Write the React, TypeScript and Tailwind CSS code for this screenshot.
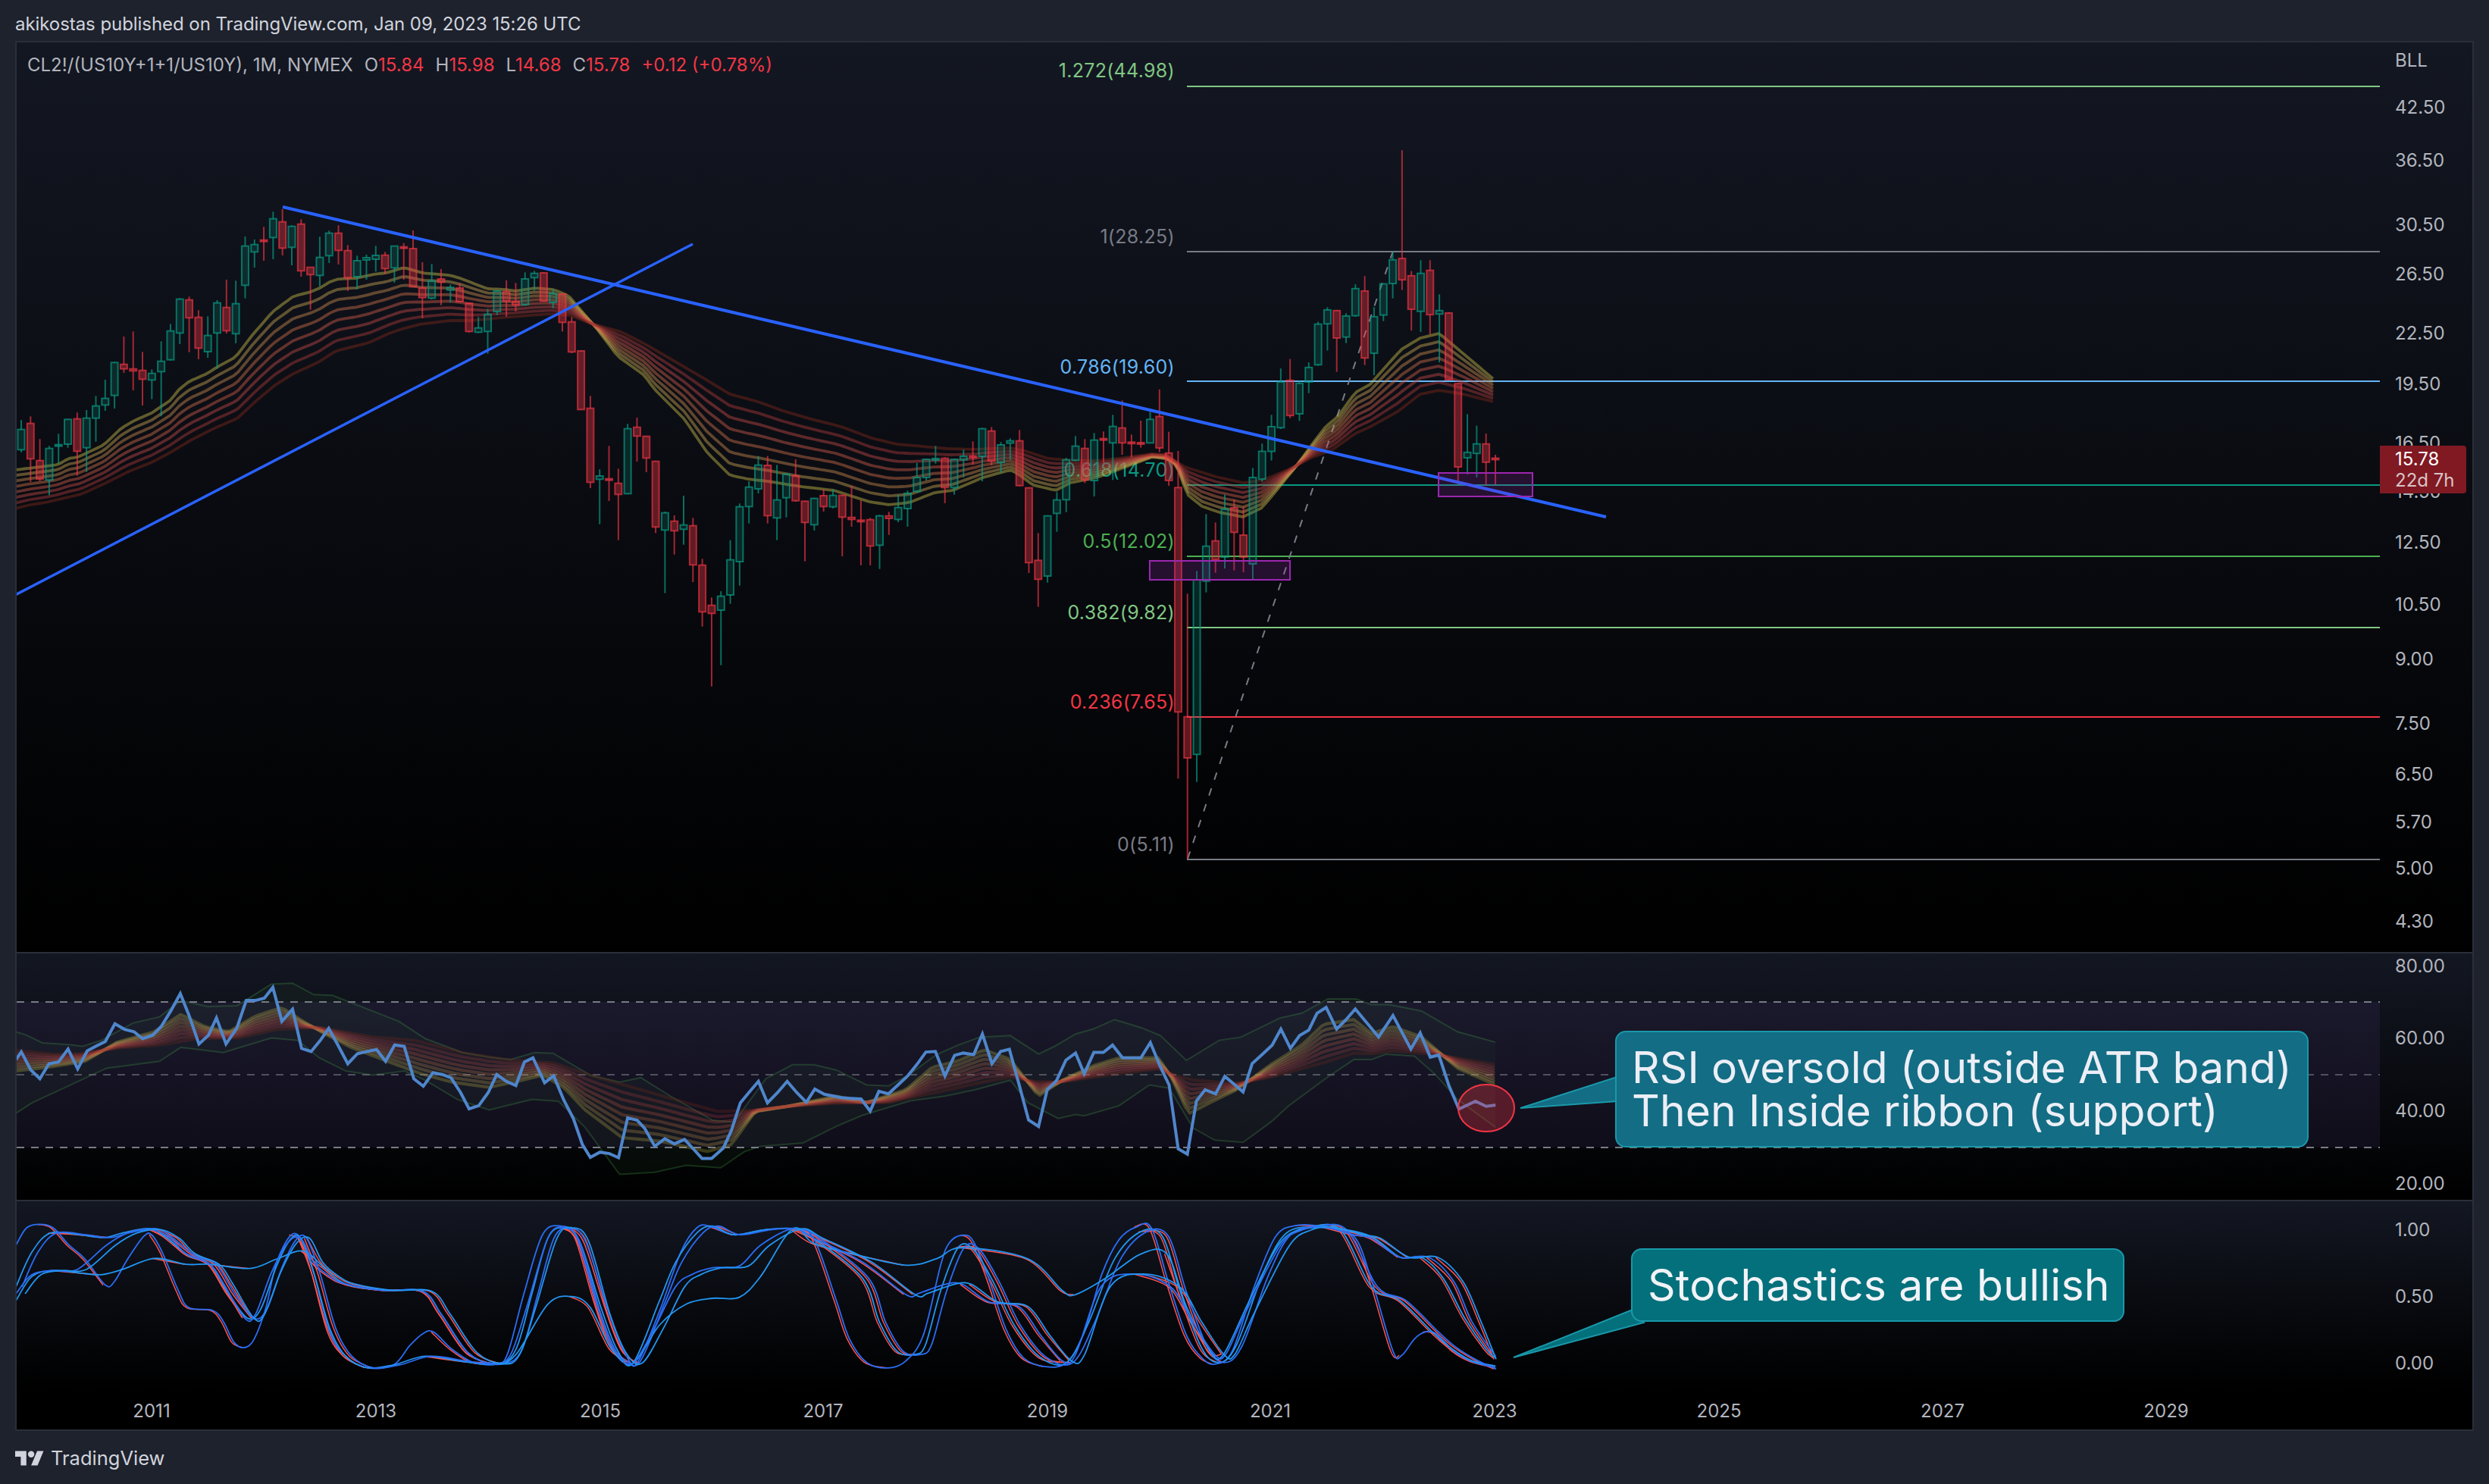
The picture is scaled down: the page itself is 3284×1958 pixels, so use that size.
type Pt = number[];
type Row = [string, number, number, number, number];

// candles are read off the chart as [dir, high, top, bottom, low]
const seg = (off: number, s: number, rows: Row[]): Row[] =>
  rows.map(([d, a, b, c, e]) => [d, off + a / s, off + b / s, off + c / s, off + e / s]);

const candles: Row[] = [
  ...seg(260, 3, [
    ['g', 883, 920, 1000, 1010], ['r', 868, 896, 1036, 1128], ['r', 958, 1043, 1116, 1125], ['g', 985, 995, 1120, 1180],
    ['g', 937, 980, 985, 1055], ['g', 878, 880, 978, 992], ['r', 853, 878, 1006, 1103], ['g', 843, 875, 992, 1088],
    ['g', 787, 827, 875, 968], ['g', 723, 797, 823, 846], ['g', 652, 655, 785, 837], ['r', 552, 662, 680, 696],
    ['r', 532, 680, 688, 765], ['r', 613, 686, 721, 825], ['g', 682, 698, 724, 800], ['g', 571, 650, 691, 868],
    ['g', 502, 530, 644, 647], ['g', 400, 404, 538, 582], ['r', 394, 407, 478, 614], ['r', 448, 476, 598, 642],
    ['g', 472, 548, 612, 636], ['g', 408, 419, 538, 680], ['r', 327, 437, 529, 540], ['g', 331, 422, 541, 579],
    ['g', 156, 194, 349, 401], ['g', 168, 188, 217, 279], ['r', 118, 170, 175, 252], ['g', 58, 86, 160, 246],
    ['r', 48, 98, 202, 231], ['g', 112, 116, 199, 270], ['r', 88, 107, 292, 315], ['r', 278, 278, 307, 446],
    ['g', 157, 239, 310, 354], ['g', 133, 143, 232, 261], ['r', 112, 143, 211, 267], ['r', 190, 212, 320, 372],
    ['g', 232, 252, 315, 365], ['g', 228, 240, 249, 327], ['g', 193, 231, 246, 295], ['r', 217, 230, 283, 305],
    ['g', 194, 194, 280, 339], ['r', 182, 197, 200, 327],
  ]),
  ...seg(340, 3, [
    ['r', -108, -36, 115, 115], ['r', 18, 120, 158, 240], ['g', 25, 92, 160, 165], ['r', 45, 84, 97, 188],
    ['g', 106, 118, 128, 178], ['r', 100, 120, 174, 176], ['r', 178, 180, 292, 296], ['g', 235, 278, 295, 298],
    ['g', 203, 224, 292, 380], ['g', 130, 132, 213, 227], ['r', 90, 134, 172, 234], ['r', 100, 173, 187, 213],
    ['g', 58, 84, 186, 190], ['g', 52, 62, 79, 130], ['r', 58, 60, 172, 174], ['g', 125, 142, 177, 200],
    ['r', 142, 144, 256, 292], ['r', 235, 254, 373, 378], ['r', 367, 369, 601, 603], ['r', 547, 596, 889, 912],
    ['g', 838, 864, 877, 1055], ['r', 745, 875, 880, 963], ['r', 835, 893, 937, 1118], ['g', 658, 677, 934, 936],
    ['r', 633, 671, 706, 807], ['r', 705, 707, 793, 849], ['r', 804, 806, 1066, 1090], ['g', 1005, 1010, 1078, 1328],
    ['r', 1020, 1043, 1081, 1175], ['g', 942, 1058, 1075, 1136], ['r', 1030, 1061, 1216, 1284], ['r', 1192, 1217, 1402, 1460],
    ['r', 1345, 1376, 1408, 1697], ['g', 1320, 1340, 1395, 1613], ['g', 1118, 1196, 1335, 1370], ['g', 973, 986, 1203, 1298],
    ['g', 885, 908, 985, 1052], ['g', 785, 821, 915, 933], ['r', 785, 822, 1021, 1052], ['g', 820, 959, 1030, 1118],
    ['g', 853, 857, 950, 1028],
  ]),
  ...seg(500, 3, [
    ['r', 318, 383, 482, 486], ['r', 482, 484, 568, 722], ['g', 470, 473, 577, 600], ['r', 436, 462, 505, 525],
    ['g', 436, 461, 506, 512], ['r', 458, 461, 547, 702], ['r', 423, 548, 556, 585], ['r', 480, 559, 563, 738],
    ['r', 550, 557, 661, 738], ['g', 538, 542, 658, 752], ['r', 526, 542, 552, 617], ['g', 458, 509, 556, 567],
    ['g', 442, 453, 513, 585], ['g', 332, 390, 445, 450], ['g', 316, 318, 390, 402], ['g', 265, 315, 321, 335],
    ['r', 310, 314, 430, 492], ['g', 316, 318, 430, 458], ['g', 280, 306, 320, 390], ['r', 247, 305, 310, 340],
    ['g', 193, 197, 306, 405], ['r', 190, 206, 325, 342], ['g', 250, 261, 331, 372], ['g', 235, 245, 254, 320],
    ['r', 202, 245, 422, 425], ['r', 430, 431, 727, 768], ['r', 610, 718, 793, 902], ['g', 540, 542, 780, 806],
    ['g', 448, 479, 532, 605], ['g', 312, 320, 478, 527], ['g', 226, 266, 322, 325], ['r', 238, 275, 400, 412],
    ['g', 214, 242, 402, 465], ['r', 208, 236, 241, 332], ['g', 142, 188, 253, 400], ['r', 85, 194, 253, 300],
    ['r', 220, 250, 255, 310], ['r', 165, 252, 258, 272], ['g', 130, 160, 253, 255],
  ]),
  ...seg(150, 2.24, [['r', 815, 895, 988, 1000], ['r', 940, 1003, 1084, 1100]]),
  ...seg(600, 3, [
    ['r', -15, 130, 1018, 1282], ['r', 550, 1037, 1200, 1599], ['g', 460, 495, 1186, 1295], ['g', 235, 362, 500, 545],
    ['r', 268, 341, 415, 467], ['g', 157, 215, 405, 450], ['r', 178, 210, 307, 458], ['r', 205, 318, 405, 465],
    ['g', 52, 90, 432, 495],
  ]),
  ...seg(150, 2.24, [
    ['g', 975, 998, 1080, 1088], ['g', 890, 925, 998, 1025], ['g', 753, 793, 928, 932], ['r', 725, 788, 892, 900],
    ['g', 790, 797, 887, 908], ['g', 735, 750, 793, 826], ['g', 615, 622, 742, 745], ['g', 572, 580, 621, 700],
    ['r', 580, 582, 663, 763], ['g', 590, 598, 660, 678], ['g', 504, 517, 597, 600], ['r', 480, 524, 722, 743],
    ['g', 572, 600, 708, 773], ['g', 503, 503, 595, 613], ['g', 408, 432, 502, 546], ['r', 108, 428, 491, 521],
    ['r', 465, 479, 578, 641], ['g', 433, 472, 584, 645], ['r', 433, 463, 594, 652], ['g', 534, 582, 592, 735],
    ['r', 587, 589, 786, 788], ['r', 796, 798, 1044, 1095], ['g', 888, 1001, 1017, 1066], ['g', 922, 976, 1004, 1075],
    ['r', 945, 976, 1030, 1098], ['r', 1008, 1018, 1022, 1096],
  ]),
];

const candleX = (i: number) => 28 + 12.31 * i;

// the moving average ribbon: the fast and slow edges, the others sit between them
const ribbonFast: Pt[] = [
  [20, 620], [53, 616], [77, 613], [90, 605], [103, 603], [137, 587], [160, 565], [177, 555], [200, 545], [225, 528], [237, 513],
  [250, 503], [273, 493], [287, 484], [311, 471], [333, 442], [360, 411], [387, 391], [410, 385], [422, 380], [435, 372], [447, 368],
  [470, 367], [493, 362], [510, 360], [533, 353], [557, 360], [593, 363], [607, 367], [643, 381], [667, 382], [680, 384], [707, 380],
  [730, 382], [750, 390], [773, 417], [787, 433], [815, 470], [850, 495], [863, 513], [903, 553], [933, 597], [963, 627], [987, 632],
  [1013, 635], [1057, 642], [1100, 647], [1147, 662], [1173, 666], [1200, 663], [1233, 650], [1257, 647], [1297, 630], [1333, 620],
  [1343, 625], [1363, 640], [1393, 647], [1412, 637], [1447, 630], [1480, 618], [1520, 603], [1538, 605], [1553, 614], [1566, 652],
  [1586, 668], [1609, 676], [1640, 682], [1665, 670], [1686, 645], [1711, 614], [1732, 585], [1749, 563], [1765, 550], [1788, 518],
  [1808, 507], [1829, 483], [1849, 461], [1874, 446], [1899, 440], [1974, 503],
];
const ribbonSlow: Pt[] = [
  [20, 671], [40, 666], [60, 663], [77, 659], [107, 652], [140, 637], [170, 622], [200, 610], [223, 598], [253, 580], [283, 565],
  [313, 552], [340, 527], [363, 508], [387, 493], [420, 478], [443, 463], [487, 452], [513, 440], [527, 435], [553, 428], [593, 423],
  [620, 423], [653, 420], [687, 417], [727, 414], [753, 416], [780, 427], [820, 438], [853, 455], [887, 475], [930, 500], [963, 520],
  [1000, 530], [1033, 542], [1067, 552], [1110, 563], [1150, 578], [1183, 586], [1217, 589], [1250, 592], [1283, 593], [1333, 591],
  [1353, 595], [1383, 605], [1407, 607], [1447, 608], [1483, 604], [1520, 599], [1538, 600], [1563, 616], [1604, 629], [1640, 637],
  [1665, 634], [1701, 619], [1732, 603], [1757, 594], [1788, 572], [1808, 563], [1844, 543], [1874, 520], [1899, 515], [1931, 520],
  [1974, 531],
];
const ribbonColors = ['#cfc24a', '#d0a855', '#d08e50', '#d4724a', '#d45e4a', '#c84a48', '#b03c3c', '#7f2a1c'];

const at = (pts: Pt[], x: number) => {
  for (let i = 1; i < pts.length; i++) {
    if (x <= pts[i][0]) {
      const t = (x - pts[i - 1][0]) / (pts[i][0] - pts[i - 1][0]);
      return pts[i - 1][1] + (pts[i][1] - pts[i - 1][1]) * t;
    }
  }
  return pts[pts.length - 1][1];
};

const ribbon = (fast: Pt[], slow: Pt[], a: number, b: number) =>
  ribbonColors.map((_, n) => {
    const out: string[] = [];
    for (let x = a; x <= b; x += 6) {
      const f = at(fast, x);
      out.push(`${x},${(f + ((at(slow, x) - f) * n) / 7).toFixed(1)}`);
    }
    return out.join(' ');
  });

const line = (pts: Pt[]) => pts.map((p) => `${p[0].toFixed(1)},${p[1].toFixed(1)}`).join(' ');

// Catmull-Rom through the points, good enough for the stochastics
const smooth = (pts: Pt[]) => {
  let d = `M${pts[0][0]} ${pts[0][1]}`;
  for (let i = 0; i < pts.length - 1; i++) {
    const p0 = pts[Math.max(i - 1, 0)];
    const p1 = pts[i];
    const p2 = pts[i + 1];
    const p3 = pts[Math.min(i + 2, pts.length - 1)];
    d += ` C${p1[0] + (p2[0] - p0[0]) / 6} ${p1[1] + (p2[1] - p0[1]) / 6} ${p2[0] - (p3[0] - p1[0]) / 6} ${p2[1] - (p3[1] - p1[1]) / 6} ${p2[0]} ${p2[1]}`;
  }
  return d;
};

// the red signal line only shows where the stochastic is falling
const fallingRuns = (pts: Pt[]) => {
  const runs: Pt[][] = [];
  let run: Pt[] = [];
  for (let i = 1; i < pts.length; i++) {
    if (pts[i][1] > pts[i - 1][1]) {
      if (!run.length) run.push(pts[i - 1]);
      run.push(pts[i]);
    } else if (run.length) {
      runs.push(run);
      run = [];
    }
  }
  if (run.length) runs.push(run);
  return runs;
};

const a = (p: Pt) => [p[0] / 1.425, 1240 + p[1] / 2.184];
const b = (p: Pt) => [1000 + p[0] / 1.742, 1240 + p[1] / 2.376];
const c = (p: Pt) => [1800 + p[0] / 1.0566, 1240 + p[1] / 2.184];

const join = (p1: Pt[], p2: Pt[], p3: Pt[]) => [
  ...p1.map(a).filter((p) => p[0] <= 1100),
  ...p2.map(b).filter((p) => p[0] > 1100 && p[0] <= 1800),
  ...p3.map(c).filter((p) => p[0] > 1800),
];

const rsiLine = join(
  [[30, 345], [40, 323], [58, 375], [75, 400], [92, 357], [110, 352], [128, 315], [146, 372], [164, 320], [182, 305], [198, 293], [216, 242], [234, 258], [252, 265], [268, 285], [287, 275], [303, 250], [321, 205], [339, 155], [356, 220], [374, 300], [392, 275], [407, 225], [425, 300], [445, 255], [463, 175], [480, 175], [497, 168], [513, 137], [530, 235], [550, 200], [567, 313], [585, 322], [602, 290], [618, 255], [636, 305], [654, 357], [672, 328], [690, 322], [708, 316], [725, 350], [742, 303], [760, 307], [778, 400], [796, 422], [814, 383], [832, 388], [848, 398], [866, 440], [882, 487], [900, 478], [918, 440], [934, 388], [952, 408], [970, 420], [986, 352], [1002, 340], [1024, 412], [1041, 392], [1060, 462], [1078, 515], [1095, 590], [1110, 627], [1128, 612], [1146, 616], [1163, 628], [1180, 513], [1198, 520], [1212, 543], [1231, 595], [1250, 573], [1268, 588], [1287, 575], [1305, 605], [1320, 630], [1338, 630], [1360, 600], [1375, 550], [1392, 470], [1408, 440], [1426, 408], [1443, 470], [1462, 440], [1480, 408], [1498, 440], [1516, 468], [1532, 430], [1550, 445], [1568, 422]],
  [[192, 495], [214, 497], [237, 499], [258, 537], [278, 475], [300, 483], [322, 455], [344, 427], [366, 390], [386, 352], [408, 350], [430, 427], [452, 362], [472, 355], [496, 360], [516, 295], [538, 388], [558, 350], [578, 343], [600, 452], [622, 565], [645, 585], [665, 470], [686, 442], [708, 377], [730, 355], [750, 420], [772, 353], [794, 353], [815, 330], [838, 370], [880, 370], [902, 322], [924, 395], [945, 455], [966, 655], [987, 672], [1008, 505], [1028, 470], [1052, 483], [1073, 428], [1094, 452], [1115, 477], [1136, 388], [1160, 358], [1182, 330], [1202, 280], [1224, 340], [1245, 300], [1266, 283], [1285, 230], [1306, 212], [1330, 280], [1352, 250], [1373, 217], [1394, 358]],
  [[20, 280], [40, 218], [65, 315], [78, 268], [92, 338], [104, 332], [118, 420], [132, 488], [155, 465], [170, 480], [183, 476]],
);

const bandTop = join(
  [[30, 265], [50, 275], [80, 297], [130, 302], [155, 307], [190, 290], [250, 240], [300, 222], [340, 175], [390, 192], [445, 190], [510, 128], [550, 125], [590, 158], [625, 160], [700, 205], [750, 235], [800, 285], [870, 325], [920, 338], [960, 345], [1005, 325], [1040, 327], [1110, 390], [1165, 410], [1205, 397], [1260, 450], [1340, 520], [1380, 525], [1440, 400], [1490, 360], [1530, 360], [1568, 372]],
  [[180, 408], [250, 455], [300, 458], [345, 425], [410, 360], [460, 330], [510, 305], [580, 300], [645, 358], [680, 335], [730, 295], [770, 280], [820, 250], [880, 275], [925, 300], [985, 378], [1060, 315], [1110, 305], [1200, 245], [1250, 230], [1310, 185], [1375, 185], [1394, 205]],
  [[10, 187], [35, 187], [80, 205], [130, 265], [183, 295]],
);
const bandLow = join(
  [[30, 500], [60, 470], [130, 420], [200, 370], [300, 350], [340, 310], [420, 325], [510, 283], [560, 290], [600, 340], [650, 378], [700, 390], [760, 378], [800, 405], [860, 460], [920, 490], [1000, 460], [1050, 465], [1100, 540], [1165, 676], [1230, 670], [1290, 650], [1355, 657], [1400, 610], [1430, 595], [1510, 585], [1568, 530]],
  [[180, 585], [240, 550], [350, 505], [430, 490], [500, 470], [580, 440], [620, 510], [690, 560], [730, 548], [750, 552], [830, 520], [900, 455], [945, 465], [1000, 590], [1050, 628], [1115, 635], [1180, 570], [1220, 520], [1310, 430], [1370, 375], [1394, 372]],
  [[10, 345], [30, 330], [70, 335], [100, 390], [130, 460], [183, 540]],
);
const rsiFast = join(
  [[30, 378], [100, 365], [160, 350], [220, 295], [290, 265], [340, 215], [385, 250], [430, 265], [480, 220], [530, 195], [570, 235], [610, 270], [660, 310], [720, 345], [790, 385], [850, 410], [920, 425], [980, 405], [1020, 390], [1060, 425], [1100, 490], [1170, 570], [1240, 580], [1330, 610], [1375, 590], [1420, 495], [1480, 480], [1568, 460]],
  [[180, 490], [250, 510], [340, 470], [400, 400], [460, 380], [520, 345], [580, 375], [645, 490], [700, 440], [770, 395], [830, 370], [920, 370], [950, 430], [990, 545], [1040, 510], [1100, 470], [1180, 390], [1250, 330], [1300, 265], [1370, 250], [1394, 285]],
  [[10, 270], [40, 250], [80, 280], [130, 370], [183, 418]],
);
const rsiSlow = join(
  [[30, 318], [100, 330], [150, 328], [220, 312], [300, 303], [370, 285], [450, 282], [520, 258], [600, 252], [700, 280], [780, 290], [870, 325], [950, 345], [1040, 355], [1120, 395], [1200, 430], [1280, 465], [1350, 495], [1420, 490], [1480, 480], [1568, 460]],
  [[180, 512], [300, 510], [420, 475], [520, 445], [580, 430], [640, 445], [700, 445], [800, 425], [920, 405], [960, 425], [1000, 440], [1100, 450], [1180, 430], [1300, 385], [1370, 355], [1394, 350]],
  [[10, 328], [40, 320], [100, 330], [183, 360]],
);

const stochA = join(
  [[30, 880], [50, 830], [75, 820], [100, 830], [130, 880], [160, 920], [198, 995], [215, 985], [240, 920], [270, 855], [285, 850], [305, 900], [335, 1010], [355, 1060], [400, 1068], [420, 1100], [440, 1160], [460, 1175], [478, 1150], [500, 1060], [520, 930], [548, 850], [570, 870], [590, 960], [620, 1130], [650, 1200], [690, 1233], [740, 1225], [770, 1170], [795, 1135], [815, 1130], [850, 1180], [890, 1218], [935, 1222], [955, 1190], [985, 1020], [1020, 850], [1055, 825], [1085, 860], [1120, 1040], [1150, 1170], [1182, 1218], [1200, 1215], [1240, 1070], [1280, 900], [1310, 830], [1335, 825], [1380, 850], [1440, 835], [1495, 833], [1530, 860], [1568, 1000]],
  [[180, 1130], [210, 1250], [250, 1325], [300, 1342], [340, 1320], [380, 1240], [420, 1020], [440, 950], [470, 926], [495, 945], [530, 1060], [570, 1220], [610, 1310], [660, 1338], [710, 1325], [750, 1230], [790, 1050], [830, 940], [870, 900], [905, 905], [945, 1080], [985, 1240], [1020, 1310], [1050, 1330], [1090, 1290], [1140, 1090], [1190, 930], [1240, 895], [1300, 900], [1370, 930]],
  [[10, 980], [40, 1185], [52, 1198], [70, 1150], [85, 1130], [100, 1135], [125, 1185], [150, 1215], [183, 1232]],
);
const stochB = join(
  [[30, 1000], [60, 900], [95, 845], [150, 850], [195, 858], [230, 845], [280, 832], [310, 855], [355, 910], [395, 935], [430, 1020], [465, 1090], [490, 1065], [520, 940], [545, 865], [565, 860], [590, 960], [620, 1120], [650, 1200], [690, 1233], [740, 1225], [800, 1200], [870, 1215], [935, 1222], [970, 1180], [1000, 1020], [1030, 860], [1060, 830], [1090, 870], [1130, 1060], [1160, 1180], [1190, 1220], [1240, 1040], [1270, 930], [1310, 845], [1340, 825], [1380, 850], [1440, 835], [1495, 833], [1530, 860], [1568, 920]],
  [[170, 1010], [240, 1060], [280, 1200], [320, 1290], [360, 1300], [385, 1270], [420, 1100], [460, 965], [495, 970], [540, 1070], [590, 1210], [650, 1310], [710, 1325], [760, 1200], [820, 1000], [880, 915], [930, 930], [970, 1100], [1020, 1280], [1060, 1325], [1100, 1270], [1160, 1050], [1210, 925], [1270, 900], [1340, 910], [1394, 960]],
  [[10, 1000], [50, 1040], [95, 1130], [120, 1175], [150, 1213], [183, 1228]],
);
const stochC = join(
  [[30, 1040], [60, 970], [100, 953], [150, 960], [190, 965], [230, 950], [290, 918], [350, 935], [395, 935], [470, 947], [520, 920], [570, 897], [610, 945], [650, 992], [720, 1010], [795, 1013], [830, 1080], [880, 1190], [930, 1222], [970, 1195], [1030, 1050], [1075, 1028], [1110, 1060], [1150, 1180], [1190, 1220], [1240, 1110], [1290, 1050], [1340, 1033], [1390, 1030], [1430, 970], [1490, 833], [1530, 875], [1568, 950]],
  [[170, 950], [220, 985], [340, 1020], [410, 1000], [470, 965], [620, 1000], [700, 1100], [730, 1112], [800, 1060], [880, 985], [940, 985], [985, 1150], [1040, 1290], [1070, 1300], [1130, 1130], [1200, 950], [1260, 905], [1330, 905], [1394, 925]],
  [[10, 855], [50, 915], [80, 915], [110, 975], [140, 1090], [170, 1180], [183, 1205]],
);
const stochD = join(
  [[30, 1020], [60, 965], [100, 953], [145, 950], [200, 880], [240, 845], [285, 835], [320, 860], [350, 905], [395, 935], [420, 990], [460, 1090], [480, 1080], [510, 960], [540, 875], [565, 860], [590, 930], [620, 970], [650, 992], [720, 1010], [795, 1013], [830, 1080], [880, 1190], [930, 1222], [960, 1195], [990, 1060], [1030, 860], [1060, 830], [1090, 870], [1130, 1080], [1160, 1190], [1190, 1220], [1230, 1120], [1270, 1000], [1300, 965], [1340, 945], [1390, 940], [1430, 880], [1490, 833], [1530, 860], [1568, 920]],
  [[170, 960], [240, 1010], [340, 1112], [370, 1108], [430, 1080], [470, 1080], [530, 1135], [600, 1150], [650, 1240], [700, 1320], [730, 1300], [790, 1085], [870, 1048], [950, 1090], [1000, 1200], [1050, 1300], [1075, 1300], [1120, 1170], [1200, 960], [1250, 910], [1300, 900], [1370, 925], [1394, 940]],
  [[10, 860], [50, 915], [90, 915], [125, 985], [150, 1100], [183, 1200]],
);
const shift = (pts: Pt[], dx: number) => pts.map((p) => [p[0] + dx, p[1]]).filter((p) => p[0] < 1974);
// a shifted line still has to reach the last bar
const shiftEnd = (pts: Pt[], dx: number) => [...shift(pts, dx), [1974, pts[pts.length - 1][1] + 4]];
const stochs = [stochA, stochB, shiftEnd(stochB, 8), stochC, stochD, shiftEnd(stochD, 12)];

const fibs = [
  { label: '1.272(44.98)', y: 114, ly: 94, color: '#81c784' },
  { label: '1(28.25)', y: 332, ly: 313, color: '#787b86' },
  { label: '0.786(19.60)', y: 503, ly: 485, color: '#64b5f6' },
  { label: '0.618(14.70)', y: 640, ly: 621, color: '#089981' },
  { label: '0.5(12.02)', y: 734, ly: 715, color: '#4caf50' },
  { label: '0.382(9.82)', y: 828, ly: 809, color: '#81c784' },
  { label: '0.236(7.65)', y: 946, ly: 927, color: '#f23645' },
  { label: '0(5.11)', y: 1134, ly: 1115, color: '#787b86' },
];

const prices: [string, number][] = [
  ['BLL', 80], ['42.50', 142], ['36.50', 212], ['30.50', 297], ['26.50', 362], ['22.50', 440], ['19.50', 507], ['16.50', 585],
  ['14.50', 649], ['12.50', 716], ['10.50', 798], ['9.00', 870], ['7.50', 955], ['6.50', 1022], ['5.70', 1085], ['5.00', 1146], ['4.30', 1216],
];
const rsiScale: [string, number][] = [['80.00', 1275], ['60.00', 1370], ['40.00', 1466], ['20.00', 1562]];
const stochScale: [string, number][] = [['1.00', 1623], ['0.50', 1711], ['0.00', 1799]];
const years: [string, number][] = [
  ['2011', 200], ['2013', 496], ['2015', 792], ['2017', 1086], ['2019', 1382], ['2021', 1676], ['2023', 1972], ['2025', 2268], ['2027', 2563], ['2029', 2858],
];

function Axis({ items, top }: { items: [string, number][]; top: number }) {
  return (
    <div className="relative w-[122px] shrink-0 text-[24px] leading-[28px] text-[#b2b5be]">
      {items.map(([t, y]) => (
        <span key={t} className="absolute left-[20px] -translate-y-1/2" style={{ top: y - top }}>
          {t}
        </span>
      ))}
    </div>
  );
}

function MainChart() {
  const bands = ribbon(ribbonFast, ribbonSlow, 20, 1974);
  return (
    <svg className="absolute inset-0 h-full w-full" viewBox="22 56 3118 1200" fill="none">
      {fibs.map((f) => (
        <line key={f.label} x1={1566} x2={3140} y1={f.y} y2={f.y} stroke={f.color} strokeWidth={2} />
      ))}
      <line x1={1567} y1={1133} x2={1838} y2={331} stroke="#787b86" strokeWidth={2} strokeDasharray="10 12" />
      {bands.map((pts, n) => (
        <polyline key={n} points={pts} stroke={ribbonColors[n]} strokeWidth={3.8} strokeOpacity={0.44} strokeLinejoin="round" />
      ))}
      {candles.map(([d, hi, top, bot, lo], i) => {
        const x = candleX(i);
        const col = d === 'g' ? '#089981' : '#f23645';
        return (
          <g key={i}>
            <line x1={x} x2={x} y1={hi} y2={top} stroke={col} strokeOpacity={d === 'g' ? 0.7 : 0.65} strokeWidth={2} />
            <line x1={x} x2={x} y1={bot} y2={lo} stroke={col} strokeOpacity={d === 'g' ? 0.7 : 0.65} strokeWidth={2} />
            <rect
              x={x - 4.5}
              y={top}
              width={9}
              height={Math.max(bot - top, 2)}
              fill={col}
              fillOpacity={d === 'g' ? 0.2 : 0.38}
              stroke={col}
              strokeOpacity={d === 'g' ? 0.7 : 0.65}
              strokeWidth={2}
            />
          </g>
        );
      })}
      <line x1={373} y1={273} x2={2119} y2={682} stroke="#2962ff" strokeWidth={4} />
      <line x1={20} y1={785} x2={914} y2={322} stroke="#2962ff" strokeWidth={3.5} />
      <rect x={1517} y={740} width={185} height={25} fill="#9c27b0" fillOpacity={0.2} stroke="#9c27b0" strokeWidth={2} />
      <rect x={1898} y={624} width={124} height={31} fill="#9c27b0" fillOpacity={0.2} stroke="#9c27b0" strokeWidth={2} />
    </svg>
  );
}

function RsiChart() {
  const bands = ribbon(rsiFast, rsiSlow, 22, 1974);
  const band = [...bandTop, ...[...bandLow].reverse()];
  return (
    <svg className="absolute inset-0 h-full w-full" viewBox="22 1258 3118 325" fill="none">
      <rect x={22} y={1322} width={3118} height={192} fill="#7e57c2" fillOpacity={0.1} />
      <polygon points={line(band)} fill="#4caf50" fillOpacity={0.05} />
      <polyline points={line(bandTop)} stroke="#4caf50" strokeOpacity={0.25} strokeWidth={2} />
      <polyline points={line(bandLow)} stroke="#4caf50" strokeOpacity={0.25} strokeWidth={2} />
      <line x1={22} x2={3140} y1={1322} y2={1322} stroke="#787b86" strokeWidth={2} strokeDasharray="10 9" />
      <line x1={22} x2={3140} y1={1418} y2={1418} stroke="#787b86" strokeOpacity={0.6} strokeWidth={2} strokeDasharray="10 9" />
      <line x1={22} x2={3140} y1={1514} y2={1514} stroke="#787b86" strokeWidth={2} strokeDasharray="10 9" />
      {bands.map((pts, n) => (
        <polyline key={n} points={pts} stroke={ribbonColors[n]} strokeWidth={4.2} strokeOpacity={0.26} strokeLinejoin="round" />
      ))}
      <polyline points={line(rsiLine)} stroke="#4f86cc" strokeWidth={4} strokeLinejoin="miter" />
      <ellipse cx={1961} cy={1462} rx={37} ry={31} fill="#f23645" fillOpacity={0.3} stroke="#f23645" strokeWidth={2} />
      <polygon points="2006,1462 2133,1421 2133,1453" fill="#136d84" stroke="#1998a9" strokeWidth={2} />
    </svg>
  );
}

function StochChart() {
  return (
    <svg className="absolute inset-0 h-full w-full" viewBox="22 1585 3118 248" fill="none">
      {stochs.flatMap((pts, n) =>
        fallingRuns(shift(pts, -3)).map((run, k) => (
          <path key={`${n}-${k}`} d={smooth(run)} stroke="#ff5252" strokeWidth={1.5} />
        )),
      )}
      {stochs.map((pts, n) => (
        <path key={n} d={smooth(pts)} stroke={n % 2 ? '#2196f3' : '#2a6df5'} strokeWidth={1.8} />
      ))}
      <polygon points="1997,1791 2154,1728 2169,1745" fill="#04707c" stroke="#1998a9" strokeWidth={2} />
    </svg>
  );
}

export default function App() {
  return (
    <div className="flex h-[1958px] w-[3284px] flex-col bg-[#1e222d] font-[Inter,sans-serif] text-[24px]">
      <header className="flex h-[54px] shrink-0 items-center px-[20px] pt-[10px] tracking-[-0.06px] text-[#d1d4dc]">
        akikostas published on TradingView.com, Jan 09, 2023 15:26 UTC
      </header>

      <div className="mx-[20px] flex h-[1834px] shrink-0 flex-col border-2 border-[#2a2e39] bg-black">
        <section className="flex h-[1200px] shrink-0 bg-linear-to-b/srgb from-[#131722] to-[#000000]">
          <div className="relative flex-1">
            {fibs.map((f) => (
              <span
                key={f.label}
                className="absolute right-[1590px] -translate-y-1/2 whitespace-nowrap text-[25px] tracking-[0.3px]"
                style={{ top: f.ly - 56, color: f.color }}
              >
                {f.label}
              </span>
            ))}
            <MainChart />
            <div className="absolute left-[14px] top-[16px] flex gap-[15px] whitespace-nowrap leading-[28px] text-[#b2b5be]">
              <span>CL2!/(US10Y+1+1/US10Y), 1M, NYMEX</span>
              <span>
                O<span className="text-[#f23645]">15.84</span>
              </span>
              <span>
                H<span className="text-[#f23645]">15.98</span>
              </span>
              <span>
                L<span className="text-[#f23645]">14.68</span>
              </span>
              <span>
                C<span className="text-[#f23645]">15.78</span>
              </span>
              <span className="text-[#f23645]">+0.12 (+0.78%)</span>
            </div>
          </div>
          <div className="relative flex">
            <Axis items={prices} top={56} />
            <div className="absolute left-0 top-[532px] flex h-[63px] w-[114px] flex-col rounded-r-[4px] bg-[#801922] pl-[20px] pt-[4px] leading-[28px]">
              <span className="text-white">15.78</span>
              <span className="text-[#d8c4c6]">22d 7h</span>
            </div>
          </div>
        </section>

        <div className="h-[2px] shrink-0 bg-[#2a2e39]" />

        <section className="flex h-[325px] shrink-0 bg-linear-to-b/srgb from-[#131722] to-[#000000]">
          <div className="relative flex-1">
            <RsiChart />
            <div className="absolute left-[2109px] top-[102px] h-[154px] w-[915px] rounded-[14px] border-2 border-[#1998a9] bg-[#136d84] pl-[20px] pt-[18px] text-[57px] leading-[57px] tracking-[0.12px] text-[#eceef6]">
              <div>RSI oversold (outside ATR band)</div>
              <div>Then Inside ribbon (support)</div>
            </div>
          </div>
          <Axis items={rsiScale} top={1258} />
        </section>

        <div className="h-[2px] shrink-0 bg-[#2a2e39]" />

        <section className="flex h-[248px] shrink-0 bg-linear-to-b/srgb from-[#131722] to-[#000000]">
          <div className="relative flex-1">
            <StochChart />
            <div className="absolute left-[2130px] top-[62px] flex h-[97px] w-[651px] items-center rounded-[14px] border-2 border-[#1998a9] bg-[#04707c] pl-[20px] text-[57px] leading-[57px] tracking-[0.25px] text-[#f2f3f7]">
              Stochastics are bullish
            </div>
          </div>
          <Axis items={stochScale} top={1585} />
        </section>

        <div className="relative h-[53px] shrink-0 bg-black text-[#b2b5be]">
          {years.map(([t, x]) => (
            <span key={t} className="absolute top-[15px] -translate-x-1/2 leading-[28px]" style={{ left: x - 22 }}>
              {t}
            </span>
          ))}
        </div>
      </div>

      <footer className="flex flex-1 items-center gap-[9px] px-[20px] pt-[2px] text-[25.5px] text-[#d1d4dc]">
        <svg width="38" height="20" viewBox="0 4 36 18" fill="#d1d4dc">
          <path d="M14 22H7V11H0V4h14v18zM28 22h-8l7.5-18h8L28 22z" />
          <circle cx="20" cy="8" r="4" />
        </svg>
        <span>TradingView</span>
      </footer>
    </div>
  );
}
